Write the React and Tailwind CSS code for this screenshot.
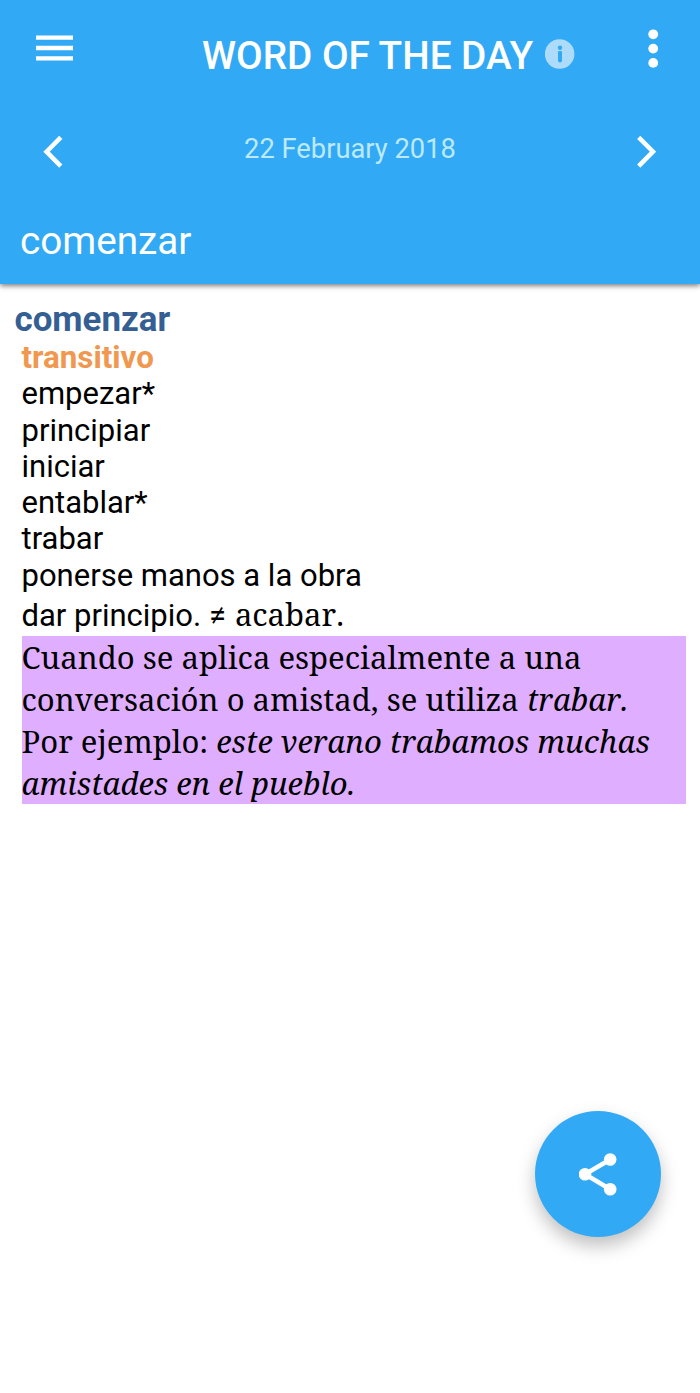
const sinonimos = ['empezar*', 'principiar', 'iniciar', 'entablar*', 'trabar', 'ponerse manos a la obra'];

function Header() {
  return (
    <header className="relative h-[284px] bg-[#32a9f4] text-white shadow-[0_2px_5px_rgba(0,0,0,0.5)]">
      <div className="flex h-[104px] items-start">
        <button className="ml-9 mt-[35px] w-[37px]" aria-label="Menu">
          <svg viewBox="0 0 37 26" className="block h-[26px] w-[37px]" fill="currentColor">
            <path d="M0 .4h37v4.400H0zM0 10.800h37v4.400H0zM0 21.200h37v4.400H0z" />
          </svg>
        </button>
        <h1 className="ml-[129px] mt-8 w-[331px] whitespace-nowrap text-[38.700px] font-medium leading-[48px]">
          WORD OF THE DAY
        </h1>
        <svg viewBox="0 0 30 30" className="ml-3 mt-[39px] size-[30px]">
          <circle cx="14.600" cy="15" r="14.800" fill="#addcfb" />
          <circle cx="15" cy="8.800" r="2.200" fill="#32a9f4" />
          <path d="M12.800 12.500h4.200v9.300h-3.800v-7z" fill="#32a9f4" />
          <path d="M15 14v7.500" stroke="#32a9f4" strokeWidth="4" strokeLinecap="round" />
        </svg>
        <button className="ml-auto mr-[41px] mt-[29px]" aria-label="More">
          <svg viewBox="0 0 12 40" className="block h-10 w-3" fill="currentColor">
            <circle cx="6.200" cy="5.300" r="4.900" />
            <circle cx="6.200" cy="19.600" r="4.900" />
            <circle cx="6.200" cy="33.900" r="4.900" />
          </svg>
        </button>
      </div>
      <div className="flex h-24 items-center justify-between px-[43px]">
        <svg viewBox="0 0 20 34" className="h-[34px] w-5" fill="none" stroke="currentColor" strokeWidth="4.500">
          <path d="M17.800 2.300 3.500 16.700l14.300 14.400" />
        </svg>
        <span className="-mt-[5px] text-[27.300px] text-[#bce9fd]">22 February 2018</span>
        <svg viewBox="0 0 20 34" className="h-[34px] w-5" fill="none" stroke="currentColor" strokeWidth="4.500">
          <path d="M1.700 2.300 16 16.700 1.700 31.100" />
        </svg>
      </div>
      <h2 className="px-5 pt-[17px] text-[38.700px] leading-[48px]">comenzar</h2>
    </header>
  );
}

export default function App() {
  return (
    <div className="relative min-h-[1393px] w-[700px] overflow-hidden bg-white font-['Roboto',sans-serif]">
      <Header />
      <main className="pl-[21.500px] pr-[14px] pt-4 text-[31px] leading-[36.300px] text-black">
        <h3 className="-ml-[7px] h-10 text-[34.900px] font-bold leading-10 text-[#355f93]">comenzar</h3>
        <div className="text-[31.300px] font-bold text-[#f0984f]">transitivo</div>
        {sinonimos.map((palabra) => (
          <div key={palabra}>{palabra}</div>
        ))}
        <div className="h-[41.500px] leading-[41px]">
          dar principio.{' '}
          <span className="inline-block w-[26px]">≠</span>
          <span className="font-['Noto_Serif',serif] [font-kerning:none]">acabar.</span>
        </div>
        <p className="whitespace-nowrap bg-[#dfaeff] font-['Noto_Serif','DejaVu_Serif',serif] text-[31.050px] leading-[42px] [font-kerning:none]">
          Cuando se aplica especialmente a una<br />
          conversación o amistad, se utiliza <i>trabar.</i><br />
          Por ejemplo: <i>este verano trabamos muchas</i><br />
          <i>amistades en el pueblo.</i>
        </p>
      </main>
      <button
        className="absolute left-[535px] top-[1111px] flex size-[126px] items-center justify-center rounded-full bg-[#32a9f4] text-white shadow-[0_9px_18px_rgba(0,0,0,0.25)]"
        aria-label="Share"
      >
        <svg viewBox="0 0 38 44" className="h-11 w-[38px]" fill="currentColor">
          <path d="M31.200 7.500 6 22.300l25.200 14.900" fill="none" stroke="currentColor" strokeWidth="4.500" />
          <circle cx="31.200" cy="7.500" r="6.300" />
          <circle cx="6" cy="22.300" r="6.300" />
          <circle cx="31.200" cy="37.200" r="6.300" />
        </svg>
      </button>
    </div>
  );
}
